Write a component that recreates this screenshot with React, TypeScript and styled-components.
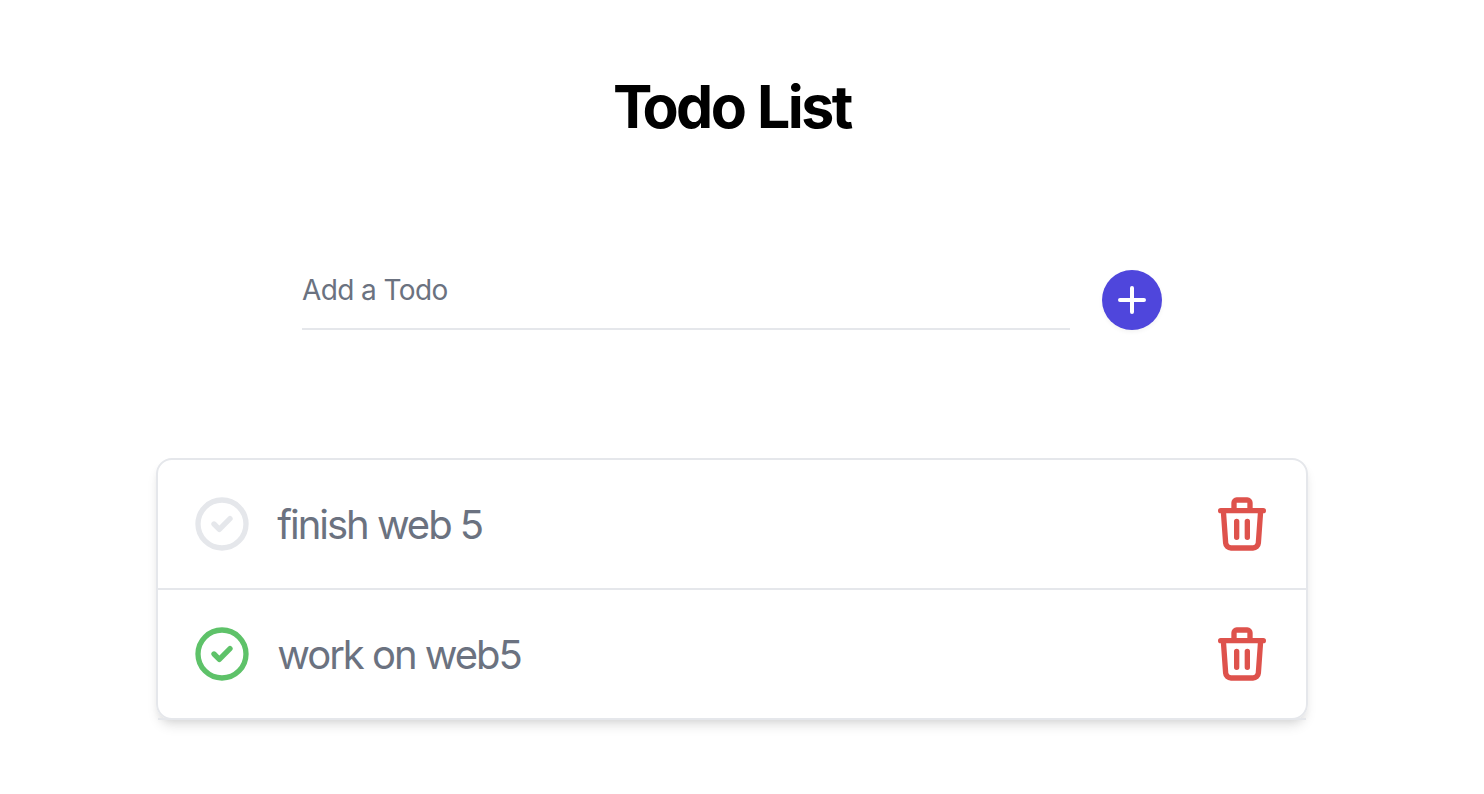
import React, { useState } from "react";
import styled, { createGlobalStyle } from "styled-components";

const GlobalStyle = createGlobalStyle`
  *, *::before, *::after { box-sizing: border-box; }
  body {
    margin: 0;
    background: #fff;
    font-family: Inter, "Liberation Sans", sans-serif;
    -webkit-font-smoothing: antialiased;
  }
`;

const Page = styled.main`
  width: 1464px;
  height: 794px;
  display: flex;
  flex-direction: column;
  align-items: center;
  overflow: hidden;
`;

const Title = styled.h1`
  margin: 77px 0 0;
  font-size: 59px;
  line-height: 60px;
  font-weight: 700;
  letter-spacing: -2.5px;
  word-spacing: 1px;
  color: #000;
`;

const TitleInitial = styled.span`
  letter-spacing: -10px;
`;

const AddForm = styled.form`
  margin-top: 133px;
  width: 860px;
  height: 60px;
  display: flex;
  gap: 32px;
`;

const TodoInput = styled.input`
  flex: 1;
  min-width: 0;
  padding: 0 0 18px;
  border: 0;
  border-bottom: 2px solid #e5e7eb;
  outline: none;
  background: transparent;
  font: 400 28px/40px Inter, "Liberation Sans", sans-serif;
  letter-spacing: -0.6px;
  color: #6b7280;
  &::placeholder { color: #6b7280; opacity: 1; }
`;

const AddButton = styled.button`
  width: 60px;
  height: 60px;
  padding: 0;
  border: 0;
  border-radius: 50%;
  display: grid;
  place-items: center;
  background: #4f46dc;
  color: #fff;
  box-shadow: 0 2px 4px rgba(0, 0, 0, 0.05);
`;

const List = styled.ul`
  margin: 128px 0 0;
  padding: 0;
  list-style: none;
  width: 1152px;
  height: 262px;
  border: 2px solid #e5e7eb;
  border-radius: 16px;
  box-shadow: 0 8px 12px -2px rgba(0, 0, 0, 0.1), 0 4px 8px -4px rgba(0, 0, 0, 0.1);
`;

const Item = styled.li`
  height: 130px;
  padding: 0 32px;
  display: flex;
  align-items: center;
  border-bottom: 2px solid #e5e7eb;
`;

const Label = styled.span`
  flex: 1;
  margin-left: 23.2px;
  padding-top: 2px;
  font-size: 40px;
  line-height: 56px;
  font-weight: 400;
  letter-spacing: -2.02px;
  color: #6b7280;
`;

const IconButton = styled.button<{ $color: string }>`
  display: flex;
  padding: 0;
  border: 0;
  background: none;
  color: ${(p) => p.$color};
`;

const StrokeIcon = ({ d, size }: { d: string; size: number }) => (
  <svg
    width={size}
    height={size}
    viewBox="0 0 24 24"
    fill="none"
    stroke="currentColor"
    strokeWidth={2}
    strokeLinecap="round"
    strokeLinejoin="round"
    aria-hidden="true"
  >
    <path d={d} />
  </svg>
);

const icons = {
  plus: "M12 6v12m6-6H6",
  check: "M9 12l2 2 4-4m6 2a9 9 0 11-18 0 9 9 0 0118 0z",
  trash:
    "M19 7l-.867 12.142A2 2 0 0116.138 21H7.862a2 2 0 01-1.995-1.858L5 7m5 4v6m4-6v6m1-10V4a1 1 0 00-1-1h-4a1 1 0 00-1 1v3M4 7h16",
};

const initialTodos = [
  { id: 1, text: "finish web 5", done: false },
  { id: 2, text: "work on web5", done: true },
];

export default function App() {
  const [todos, setTodos] = useState(initialTodos);
  const [draft, setDraft] = useState("");

  const add = (e: React.FormEvent) => {
    e.preventDefault();
    if (!draft.trim()) return;
    setTodos([...todos, { id: Date.now(), text: draft, done: false }]);
    setDraft("");
  };
  const toggle = (id: number) =>
    setTodos(todos.map((t) => (t.id === id ? { ...t, done: !t.done } : t)));
  const remove = (id: number) => setTodos(todos.filter((t) => t.id !== id));

  return (
    <>
      <GlobalStyle />
      <Page>
        <Title><TitleInitial>T</TitleInitial>odo List</Title>
        <AddForm onSubmit={add}>
          <TodoInput
            placeholder="Add a Todo"
            value={draft}
            onChange={(e) => setDraft(e.target.value)}
          />
          <AddButton type="submit" aria-label="Add">
            <StrokeIcon d={icons.plus} size={48} />
          </AddButton>
        </AddForm>
        <List>
          {todos.map((t) => (
            <Item key={t.id}>
              <IconButton
                $color={t.done ? "#5ec269" : "#e5e7eb"}
                aria-label="Toggle"
                onClick={() => toggle(t.id)}
              >
                <StrokeIcon d={icons.check} size={64} />
              </IconButton>
              <Label>{t.text}</Label>
              <IconButton $color="#de524c" aria-label="Delete" onClick={() => remove(t.id)}>
                <StrokeIcon d={icons.trash} size={64} />
              </IconButton>
            </Item>
          ))}
        </List>
      </Page>
    </>
  );
}
